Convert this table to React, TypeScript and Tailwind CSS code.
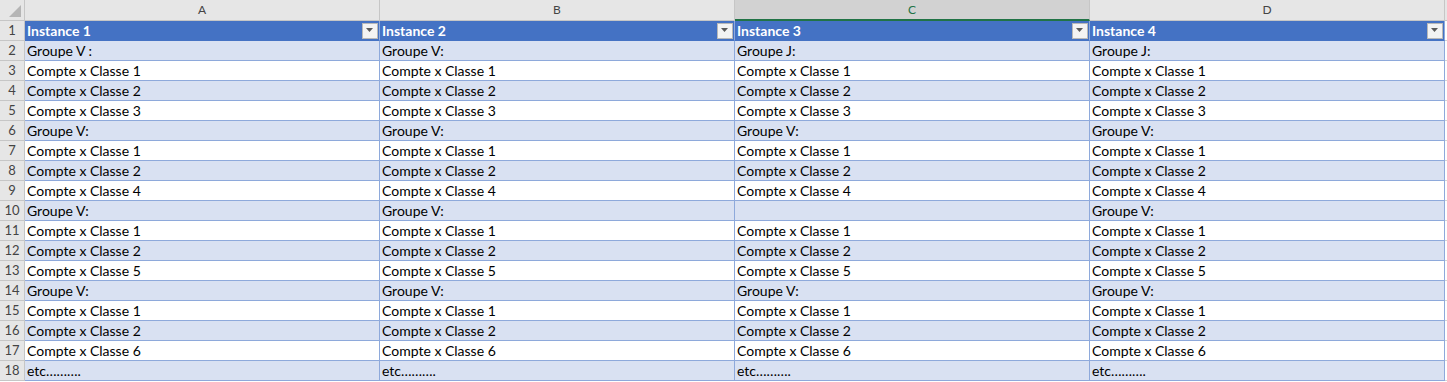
import React from 'react';

type Cell = string;

const rows: Cell[][] = [
  ['Groupe V :', 'Groupe V:', 'Groupe J:', 'Groupe J:'],
  ['Compte x Classe 1', 'Compte x Classe 1', 'Compte x Classe 1', 'Compte x Classe 1'],
  ['Compte x Classe 2', 'Compte x Classe 2', 'Compte x Classe 2', 'Compte x Classe 2'],
  ['Compte x Classe 3', 'Compte x Classe 3', 'Compte x Classe 3', 'Compte x Classe 3'],
  ['Groupe V:', 'Groupe V:', 'Groupe V:', 'Groupe V:'],
  ['Compte x Classe 1', 'Compte x Classe 1', 'Compte x Classe 1', 'Compte x Classe 1'],
  ['Compte x Classe 2', 'Compte x Classe 2', 'Compte x Classe 2', 'Compte x Classe 2'],
  ['Compte x Classe 4', 'Compte x Classe 4', 'Compte x Classe 4', 'Compte x Classe 4'],
  ['Groupe V:', 'Groupe V:', '', 'Groupe V:'],
  ['Compte x Classe 1', 'Compte x Classe 1', 'Compte x Classe 1', 'Compte x Classe 1'],
  ['Compte x Classe 2', 'Compte x Classe 2', 'Compte x Classe 2', 'Compte x Classe 2'],
  ['Compte x Classe 5', 'Compte x Classe 5', 'Compte x Classe 5', 'Compte x Classe 5'],
  ['Groupe V:', 'Groupe V:', 'Groupe V:', 'Groupe V:'],
  ['Compte x Classe 1', 'Compte x Classe 1', 'Compte x Classe 1', 'Compte x Classe 1'],
  ['Compte x Classe 2', 'Compte x Classe 2', 'Compte x Classe 2', 'Compte x Classe 2'],
  ['Compte x Classe 6', 'Compte x Classe 6', 'Compte x Classe 6', 'Compte x Classe 6'],
  ['etc……….', 'etc……….', 'etc……….', 'etc……….'],
];

const letters = ['A', 'B', 'C', 'D'];

function FilterButton() {
  return (
    <span className="ml-auto mr-[1px] flex h-[16px] w-[16px] items-center justify-center border border-[#b8b8b8] bg-[#f3f3f3]">
      <svg width="8" height="5" viewBox="0 0 8 5">
        <path d="M0 0h7L3.5 4z" fill="#5a5a5a" />
      </svg>
    </span>
  );
}

export default function App() {
  return (
    <div className="h-[382px] w-[1447px] overflow-hidden bg-white text-[14px] text-black" style={{ fontFamily: 'Lato, "Open Sans", "Liberation Sans", sans-serif' }}>
      {/* Column headers */}
      <div className="flex h-[21px]">
        <div className="relative w-[25px] shrink-0 border-r border-b border-[#c6c6c6] bg-[#e6e6e6]">
          <svg className="absolute right-[3px] bottom-[3px]" width="12" height="12" viewBox="0 0 12 12">
            <path d="M12 0v12H0z" fill="#b5b5b5" />
          </svg>
        </div>
        {letters.map((l) =>
          l === 'C' ? (
            <div
              key={l}
              className="flex w-[355px] shrink-0 items-center justify-center border-r border-b-2 border-r-[#c6c6c6] border-b-[#217346] bg-[#d2d2d2] text-[12px] text-[#217346]"
            >
              {l}
            </div>
          ) : (
            <div
              key={l}
              className="flex w-[355px] shrink-0 items-center justify-center border-r border-b border-[#c6c6c6] bg-[#e6e6e6] text-[12px] text-[#444]"
            >
              {l}
            </div>
          )
        )}
        <div className="flex-1 border-b border-[#c6c6c6] bg-[#e6e6e6]" />
      </div>

      {/* Row 1: table header */}
      <div className="flex h-[20px]">
        <div className="flex w-[25px] shrink-0 items-center justify-center border-r border-b border-[#c6c6c6] bg-[#e6e6e6] pt-[1px] text-[13px] text-[#444]">
          1
        </div>
        {[1, 2, 3, 4].map((n) => (
          <div
            key={n}
            className="flex w-[355px] shrink-0 items-center border-r border-b border-r-[#8ea9db] border-b-[#4472c4] bg-[#4472c4] pl-[2px] font-bold text-white"
          >
            <span className="pt-[1px] leading-none">Instance {n}</span>
            <FilterButton />
          </div>
        ))}
        <div className="flex-1 border-b border-[#d4d4d4]" />
      </div>

      {/* Data rows */}
      {rows.map((r, i) => {
        const banded = i % 2 === 0;
        return (
          <div key={i} className="flex h-[20px]">
            <div className="flex w-[25px] shrink-0 items-center justify-center border-r border-b border-[#c6c6c6] bg-[#e6e6e6] pt-[1px] text-[13px] text-[#444]">
              {i + 2}
            </div>
            {r.map((c, j) => (
              <div
                key={j}
                className={`flex w-[355px] shrink-0 items-center border-r border-b border-[#8ea9db] pl-[2px] ${banded ? 'bg-[#d9e1f2]' : 'bg-white'}`}
              >
                <span className="whitespace-nowrap pt-[1px] leading-none">{c}</span>
              </div>
            ))}
            <div className="flex-1 border-b border-[#d4d4d4]" />
          </div>
        );
      })}
    </div>
  );
}
